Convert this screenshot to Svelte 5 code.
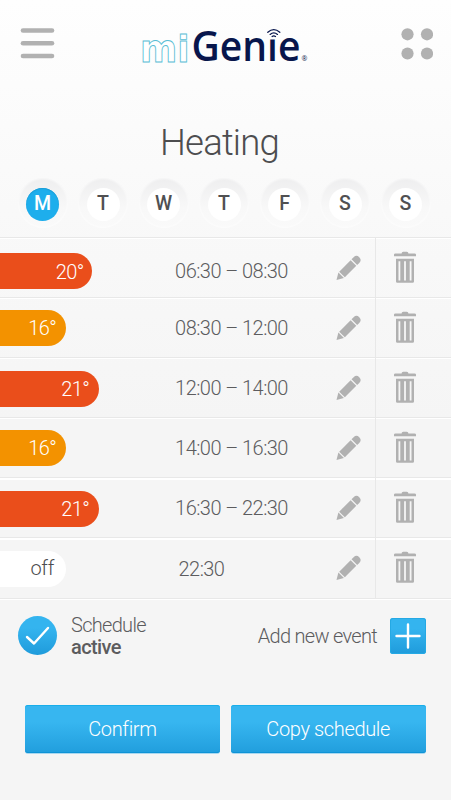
<script>
  const days = ['M', 'T', 'W', 'T', 'F', 'S', 'S'];
  let selectedDay = 0;
  let active = true;

  const events = [
    { temp: '20°', time: '06:30 – 08:30', level: 'hot', width: 91.5 },
    { temp: '16°', time: '08:30 – 12:00', level: 'warm', width: 66 },
    { temp: '21°', time: '12:00 – 14:00', level: 'hot', width: 99 },
    { temp: '16°', time: '14:00 – 16:30', level: 'warm', width: 66 },
    { temp: '21°', time: '16:30 – 22:30', level: 'hot', width: 99 },
    { temp: 'off', time: '22:30', level: 'off', width: 66 },
  ];
</script>

<style>
  :global(body) {
    margin: 0;
    background: #f5f5f5;
  }

  .screen {
    box-sizing: border-box;
    width: 451px;
    height: 800px;
    overflow: hidden;
    font-family: Roboto, sans-serif;
    font-weight: 300;
    color: #5c5c5e;
    background: linear-gradient(#fefefe 0, #f9f9f9 210px, #f5f5f5 420px);
  }

  button {
    padding: 0;
    border: 0;
    background: none;
    font: inherit;
    color: inherit;
    cursor: pointer;
  }

  svg {
    display: block;
  }

  header {
    display: flex;
    justify-content: space-between;
    height: 120px;
    padding: 0 18px 0 20px;
    box-sizing: border-box;
  }

  .menu {
    width: 35px;
    height: 46px;
    margin-top: 20px;
  }

  .dots {
    width: 32px;
    height: 46px;
    margin-top: 20px;
  }

  .menu svg,
  .dots svg {
    fill: #b1b1b1;
  }

  .logo {
    margin-right: 8px;
  }

  .mi {
    font: bold 38px 'DejaVu Sans', sans-serif;
    fill: #fff;
    stroke: #58bdd5;
    stroke-width: 0.9;
  }

  .genie {
    font: 600 41.5px 'Open Sans', sans-serif;
    fill: #08164c;
  }

  .reg {
    font: 7px 'Open Sans', sans-serif;
    fill: #08164c;
  }

  .cover {
    fill: #fdfdfd;
  }

  .waves {
    fill: none;
    stroke: #08164c;
    stroke-width: 1.3;
    stroke-linecap: round;
  }

  h1 {
    height: 58px;
    margin: 0;
    padding-right: 12px;
    font-size: 36.5px;
    line-height: 45px;
    font-weight: 300;
    letter-spacing: -0.8px;
    text-align: center;
    color: #4d4d4f;
  }

  .days {
    display: flex;
    justify-content: space-between;
    height: 59px;
    padding: 0 20.5px 0 17.5px;
  }

  .day {
    display: flex;
    align-items: center;
    justify-content: center;
    width: 50px;
    height: 50px;
    border-radius: 50%;
    background: linear-gradient(#eeeeef, #f8f8f8 60%, #fafafa);
    box-shadow: inset 0 0 2px 1px rgba(255, 255, 255, 0.6);
  }

  .day span {
    width: 33px;
    height: 33px;
    margin-top: 2px;
    border-radius: 50%;
    background: #fff;
    font-size: 19.5px;
    line-height: 32px;
    font-weight: 500;
    text-align: center;
    color: #505052;
  }

  .day.selected span {
    background: #1eaeec;
    box-shadow: inset 0 1px 1px #1a9cd6;
    color: #fff;
  }

  ul {
    margin: 0;
    padding: 0;
    list-style: none;
    border-bottom: 1px solid #e8e8e8;
    box-shadow: 0 1px 0 #fff;
  }

  .event {
    display: grid;
    grid-template-columns: 168px 127px 80px 1fr;
    box-sizing: border-box;
    height: 60px;
    border-top: 1px solid #e8e8e8;
    box-shadow: inset 0 1px 0 #fff;
  }

  .event:nth-child(n + 5) {
    box-shadow: inset 0 2px 0 #fff;
  }

  .event:last-child {
    height: 61px;
  }

  .temp {
    box-sizing: border-box;
    height: 36px;
    margin-top: 12px;
    padding-right: 10px;
    border-radius: 0 18px 18px 0;
    font-size: 20px;
    line-height: 37px;
    letter-spacing: -0.7px;
    text-align: right;
    color: #fff;
  }

  .event:nth-child(2n + 3) .temp,
  .event:last-child .temp {
    margin-top: 13px;
  }

  .event:nth-child(n + 2) .hot {
    line-height: 36px;
  }

  .event:first-child .temp {
    margin-top: 15px;
    padding-right: 8px;
    line-height: 38px;
  }

  .hot {
    background: #ea4e1b;
  }

  .warm {
    background: #f39200;
  }

  .off {
    padding-right: 12px;
    letter-spacing: -0.3px;
    line-height: 35px;
    background: #fff;
    color: #4d4d4f;
  }

  .time {
    margin-top: 12px;
    font-size: 20px;
    line-height: 36px;
    letter-spacing: -0.55px;
    text-align: center;
    white-space: nowrap;
  }

  .event:first-child .time {
    margin-top: 15px;
  }

  .event:last-child .time {
    padding-right: 60px;
    line-height: 38px;
  }

  .edit,
  .delete {
    display: flex;
    align-items: flex-start;
  }

  .edit {
    padding-left: 40px;
  }

  .delete {
    padding-left: 18px;
    border-left: 1px solid #e8e8e8;
  }

  .edit svg,
  .delete svg {
    margin-top: 13px;
    fill: #b1b1b1;
  }

  .status {
    display: flex;
    align-items: center;
    height: 74px;
    padding: 0 25px 0 18px;
    font-size: 20px;
  }

  .status p {
    flex: 1;
    margin: 0 0 0 14px;
    line-height: 22px;
    letter-spacing: -0.7px;
  }

  .status strong {
    display: block;
    font-weight: 500;
    letter-spacing: -0.6px;
  }

  .add {
    display: flex;
    align-items: center;
    gap: 13px;
    letter-spacing: -0.7px;
  }

  .check,
  .plus {
    background: linear-gradient(#34b4ef 30%, #1f9bdb);
  }

  .check {
    width: 39px;
    height: 39px;
    margin-bottom: 2px;
    border-radius: 50%;
  }

  .plus {
    width: 36px;
    height: 36px;
    border-radius: 3px;
    box-shadow: inset 0 0 0 1px #25a9e4;
  }

  .check svg,
  .plus svg {
    fill: none;
    stroke: #fff;
    stroke-width: 2.4;
    stroke-linecap: round;
    stroke-linejoin: round;
  }

  .actions {
    display: flex;
    gap: 11px;
    padding: 32px 25.5px 0 25px;
  }

  .actions button {
    flex: 1;
    height: 48px;
    border-radius: 3px;
    background: linear-gradient(#37b6f0 35%, #219edd);
    box-shadow: inset 0 1px 0 #18aeea, inset 0 -1px 0 #0f93d6, 0 1px 0 #a9d8f0;
    font-size: 20px;
    letter-spacing: -0.35px;
    color: #fff;
  }
</style>

<div class="screen">
  <header>
    <button class="menu" aria-label="Menu">
      <svg width="35" height="46" viewBox="0 0 35 46">
        <rect x="0.7" y="8.2" width="33.6" height="4.6" rx="2.3" />
        <rect x="0.7" y="21" width="33.6" height="4.6" rx="2.3" />
        <rect x="0.7" y="33.7" width="33.6" height="4.6" rx="2.3" />
      </svg>
    </button>

    <svg class="logo" width="168" height="80" viewBox="140 0 168 80">
      <text class="mi" x="140" y="61.5" textLength="49.5" lengthAdjust="spacingAndGlyphs">mi</text>
      <text class="genie" x="191.5" y="61.3" textLength="109" lengthAdjust="spacingAndGlyphs">Genie</text>
      <rect class="cover" x="267" y="26" width="13" height="13.5" />
      <path class="waves" d="M267.8 32.2q6-5.2 12 0M270.1 34.4q3.7-3 7.4 0M272.1 36.5q1.7-1.2 3.4 0" />
      <text class="reg" x="301.5" y="60.5">®</text>
    </svg>

    <button class="dots" aria-label="Apps">
      <svg width="32" height="46" viewBox="0 0 32 46">
        <circle cx="6.5" cy="14.3" r="6.1" />
        <circle cx="26" cy="14.3" r="6.1" />
        <circle cx="6.5" cy="33.5" r="6.1" />
        <circle cx="26" cy="33.5" r="6.1" />
      </svg>
    </button>
  </header>

  <h1>Heating</h1>

  <div class="days">
    {#each days as day, index}
      <button class="day" class:selected={selectedDay === index} on:click={() => (selectedDay = index)}>
        <span>{day}</span>
      </button>
    {/each}
  </div>

  <ul>
    {#each events as event}
      <li class="event">
        <div class="temp {event.level}" style="width:{event.width}px">{event.temp}</div>
        <div class="time">{event.time}</div>
        <button class="edit" aria-label="Edit">
          <svg width="28" height="32" viewBox="0 0 28 32">
            <g transform="translate(1.5 29) rotate(-45)">
              <path d="M0 0l6.6-3.9v7.8z" />
              <rect x="7.8" y="-4" width="16.2" height="8" />
              <path d="M25.2-4h3a4 4 0 0 1 0 8h-3z" />
            </g>
          </svg>
        </button>
        <button class="delete" aria-label="Delete">
          <svg width="22" height="32" viewBox="0 0 22 32">
            <path d="M7.6 2.4q0-1.6 1.6-1.6h3.6q1.6 0 1.6 1.6h6q1.6 0 1.6 1.2v1.6H0V3.6q0-1.2 1.6-1.2z" />
            <path
              fill-rule="evenodd"
              d="M2 7.8h18v22.6q0 1.4-1.4 1.4H3.4q-1.4 0-1.4-1.4zM4.5 10.2v19.2h1.8V10.2zM10.1 10.2v19.2h1.8V10.2zM15.7 10.2v19.2h1.8V10.2z" />
          </svg>
        </button>
      </li>
    {/each}
  </ul>

  <div class="status">
    <button class="check" aria-label="Toggle schedule" on:click={() => (active = !active)}>
      <svg width="39" height="39" viewBox="0 0 39 39">
        {#if active}
          <path d="M9 21l7 6.5L30 12" />
        {/if}
      </svg>
    </button>
    <p>Schedule <strong>{active ? 'active' : 'inactive'}</strong></p>
    <button class="add">
      Add new event
      <span class="plus">
        <svg width="36" height="36" viewBox="0 0 36 36">
          <path d="M18 6.5v23M6.5 18h23" />
        </svg>
      </span>
    </button>
  </div>

  <div class="actions">
    <button>Confirm</button>
    <button>Copy schedule</button>
  </div>
</div>
